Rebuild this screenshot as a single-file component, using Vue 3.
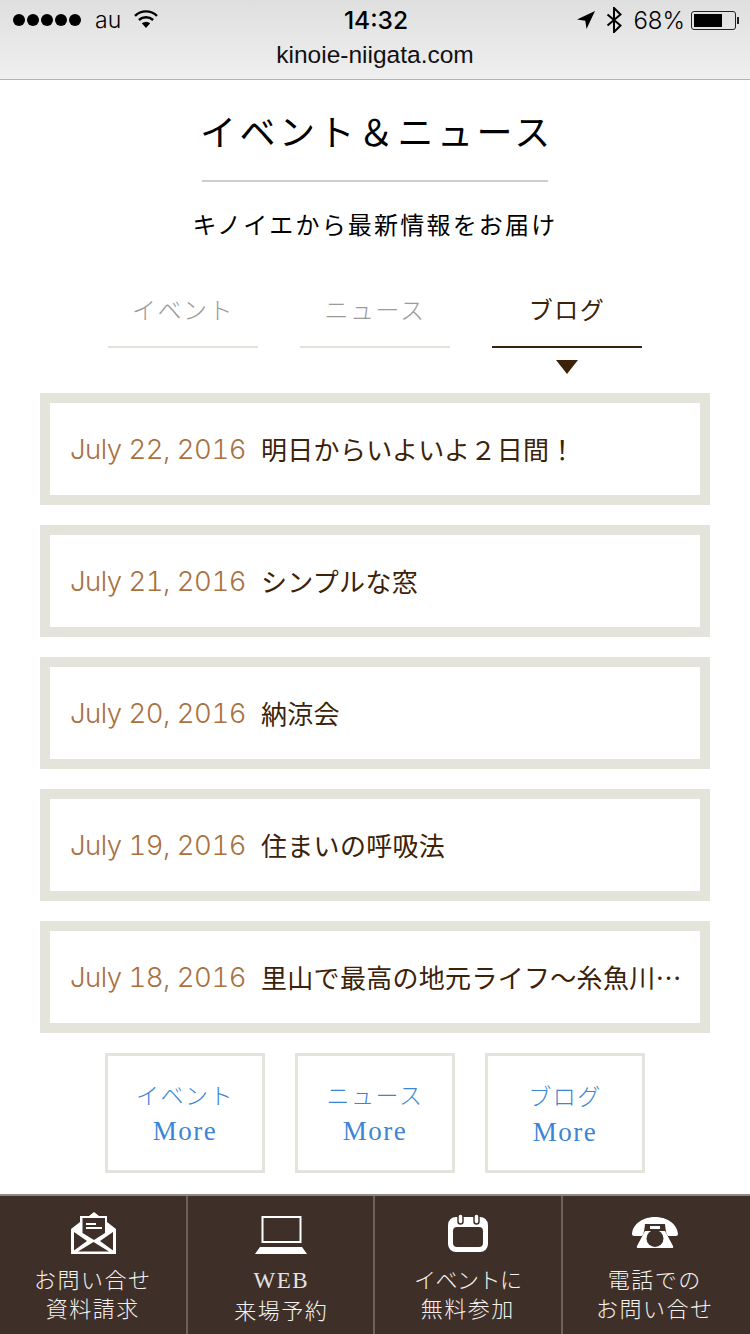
<template>
  <div class="page">
    <header class="browser">
      <div class="status">
        <div class="status-left">
          <span class="dots"><i v-for="n in 5" :key="n"></i></span>
          <span class="carrier">au</span>
          <svg class="wifi" width="26" height="20" viewBox="0 0 26 20">
            <path d="M13 19 L8.8 14.2 A6.4 6.4 0 0 1 17.2 14.2 Z" fill="#000" />
            <path d="M5.9 11 A10.6 10.6 0 0 1 20.1 11" fill="none" stroke="#000" stroke-width="2.4" />
            <path d="M2 6.8 A16 16 0 0 1 24 6.8" fill="none" stroke="#000" stroke-width="2.4" />
          </svg>
        </div>
        <div class="clock">14:32</div>
        <div class="status-right">
          <svg width="18" height="18" viewBox="0 0 18 18"><path d="M18 0 L9.5 18 L8.3 9.7 L0 8.6 Z" fill="#000" /></svg>
          <svg class="bt" width="16" height="26" viewBox="0 0 16 26"><path d="M1.500 7.500 L14.500 18.500 L8 25 V1 L14.500 7.500 L1.500 18.500" fill="none" stroke="#000" stroke-width="2" /></svg>
          <span class="pct">68%</span>
          <div class="battery"><div class="charge" :style="{ width: '72%' }"></div></div>
          <div class="nub"></div>
        </div>
      </div>
      <div class="url">kinoie-niigata.com</div>
    </header>

    <main>
      <h1>イベント＆ニュース</h1>
      <p class="lead">キノイエから最新情報をお届け</p>

      <nav class="tabs">
        <div v-for="tab in tabs" :key="tab" class="tab" :class="{ active: tab === 'ブログ' }">{{ tab }}</div>
      </nav>

      <ul class="posts">
        <li v-for="post in posts" :key="post.date">
          <span class="date">{{ post.date }}</span>
          <span class="title">{{ post.title }}</span>
        </li>
      </ul>

      <div class="more">
        <a v-for="tab in tabs" :key="tab" class="more-btn">
          <span class="ja">{{ tab }}</span>
          <span class="en">More</span>
        </a>
      </div>
    </main>

    <footer class="bottom">
      <a class="cell">
        <div class="icon">
          <svg class="mail" width="46" height="42" viewBox="0 0 46 42">
            <path d="M23 0 L28 4 H36 V10 L45 17 V42 H0 V17 L9 10 V4 H18 Z" fill="#fff" />
            <path d="M11.500 6 H34 V21 L23 28 L11.500 21 Z" fill="#3e3029" />
            <path d="M15 11 H25 V13 H15 Z M15 15 H31 V17 H15 Z" fill="#fff" />
            <path d="M3 20 L16 29 L3 38.500 Z M42 20 L29 29 L42 38.500 Z M7 39.500 L22.500 30 L38 39.500 Z" fill="#3e3029" />
          </svg>
        </div>
        <span class="label">お問い合せ<br />資料請求</span>
      </a>
      <a class="cell">
        <div class="icon">
          <svg width="52" height="38" viewBox="0 0 52 38">
            <rect x="7.500" y="1" width="38" height="25" fill="none" stroke="#fff" stroke-width="2" />
            <path d="M5 31 H47 L52 38 H0 Z" fill="#fff" />
          </svg>
        </div>
        <span class="label"><span class="latin">WEB</span><br />来場予約</span>
      </a>
      <a class="cell">
        <div class="icon">
          <svg class="cal" width="40" height="39" viewBox="0 0 40 39">
            <path fill-rule="evenodd" d="M8 4 H32 A8 8 0 0 1 40 12 V31 A8 8 0 0 1 32 39 H8 A8 8 0 0 1 0 31 V12 A8 8 0 0 1 8 4 Z M9 14 A4 4 0 0 0 5 18 V30 A4 4 0 0 0 9 34 H31 A4 4 0 0 0 35 30 V18 A4 4 0 0 0 31 14 Z" fill="#fff" />
            <rect x="10" y="1" width="5" height="10" rx="2.500" fill="#fff" stroke="#3e3029" stroke-width="1.500" />
            <rect x="26" y="1" width="5" height="10" rx="2.500" fill="#fff" stroke="#3e3029" stroke-width="1.500" />
          </svg>
        </div>
        <span class="label"><span class="tight">イベントに</span><br />無料参加</span>
      </a>
      <a class="cell">
        <div class="icon">
          <svg class="tel" width="46" height="31" viewBox="0 0 46 31">
            <path d="M0 17 C1 6 12 0 23 0 C34 0 45 6 46 17 C46 19 44 19 42 19 H37 C35 19 34 17 33 7 H13 C12 17 11 19 9 19 H4 C2 19 0 19 0 17 Z" fill="#fff" />
            <rect x="18" y="9" width="10" height="3" fill="#fff" />
            <path d="M13 14 H33 L41 29 C41.500 30.500 41 31 40 31 H6 C5 31 4.500 30.500 5 29 Z" fill="#fff" />
            <circle cx="23" cy="21.500" r="8.500" fill="#3e3029" />
          </svg>
        </div>
        <span class="label">電話での<br />お問い合せ</span>
      </a>
    </footer>
  </div>
</template>

<script setup>
const tabs = ['イベント', 'ニュース', 'ブログ']

const posts = [
  { date: 'July 22, 2016', title: '明日からいよいよ２日間！' },
  { date: 'July 21, 2016', title: 'シンプルな窓' },
  { date: 'July 20, 2016', title: '納涼会' },
  { date: 'July 19, 2016', title: '住まいの呼吸法' },
  { date: 'July 18, 2016', title: '里山で最高の地元ライフ〜糸魚川市の家づくり' },
]
</script>

<style>
html,
body {
  margin: 0;
  background: #fff;
}
</style>

<style scoped>
.page {
  width: 750px;
  height: 1334px;
  overflow: hidden;
  display: flex;
  flex-direction: column;
  font-family: "Liberation Serif", "Noto Sans CJK JP", serif;
  color: #3c2208;
}

.browser {
  height: 79px;
  flex: none;
  background: linear-gradient(#dfdfdf, #efefef);
  border-bottom: 1px solid #b4b4b4;
  font-family: "Liberation Sans", sans-serif;
  color: #000;
}

.status {
  height: 40px;
  display: grid;
  grid-template-columns: 1fr auto 1fr;
  align-items: center;
  padding: 0 11px 0 13px;
}

.status-left {
  display: flex;
  align-items: center;
}

.dots {
  display: flex;
  gap: 2px;
  margin-right: 14px;
}

.dots i {
  width: 12px;
  height: 12px;
  border-radius: 50%;
  background: #000;
}

.carrier {
  font-family: Inter, sans-serif;
  font-size: 23px;
  font-weight: 300;
  margin-right: 12px;
  color: #000;
}

.wifi {
  margin-top: -2px;
}

.clock {
  font-family: Inter, sans-serif;
  font-size: 24.500px;
  font-weight: 500;
  color: #000;
}

.status-right {
  display: flex;
  align-items: center;
  justify-content: flex-end;
}

.bt {
  margin-left: 11px;
}

.pct {
  font-family: Inter, sans-serif;
  font-size: 24px;
  font-weight: 300;
  margin-left: 11px;
  margin-right: 6px;
  color: #000;
}

.battery {
  width: 45px;
  height: 19px;
  box-sizing: border-box;
  border: 1px solid #222;
  border-radius: 3px;
  padding: 2px;
}

.charge {
  height: 100%;
  background: #000;
}

.nub {
  width: 2px;
  height: 7px;
  margin-left: 1px;
  background: #222;
}

.url {
  text-align: center;
  font-size: 24.500px;
  line-height: 30px;
  color: #111;
}

main {
  flex: 1;
  display: flex;
  flex-direction: column;
  align-items: center;
}

h1 {
  width: 346px;
  margin: 0;
  padding: 23px 0 23px;
  border-bottom: 2px solid #cdcdcd;
  font-size: 36px;
  line-height: 54px;
  font-weight: 400;
  letter-spacing: 3.500px;
  text-indent: -2px;
  white-space: nowrap;
  color: #000;
  font-family: "Noto Sans CJK JP", sans-serif;
}

.lead {
  margin: 24px 0 0;
  font-size: 24px;
  line-height: 36px;
  letter-spacing: 2.200px;
  color: #000;
  font-family: "Noto Sans CJK JP", sans-serif;
}

.tabs {
  display: flex;
  gap: 42px;
  margin-top: 46px;
}

.tab {
  position: relative;
  width: 150px;
  height: 60px;
  box-sizing: border-box;
  border-bottom: 2px solid #e2e2d9;
  text-align: center;
  font-size: 24px;
  line-height: 42px;
  letter-spacing: 1.500px;
  color: #9b9b9b;
  font-family: "Noto Sans CJK JP", sans-serif;
  font-weight: 300;
}

.tab.active {
  border-bottom-color: #3c2208;
  color: #3c2208;
  font-weight: 400;
}

.tab.active::after {
  content: "";
  position: absolute;
  left: 64px;
  top: 72px;
  border-left: 11px solid transparent;
  border-right: 11px solid transparent;
  border-top: 14px solid #3c2208;
}

.posts {
  list-style: none;
  width: 670px;
  margin: 45px 0 0;
  padding: 0;
  display: flex;
  flex-direction: column;
  gap: 20px;
}

.posts li {
  height: 112px;
  box-sizing: border-box;
  border: 10px solid #e4e4dc;
  padding: 0 16px 0 20px;
  display: flex;
  align-items: center;
  gap: 15px;
}

.date {
  flex: none;
  font-family: Inter, sans-serif;
  font-weight: 300;
  font-size: 27.500px;
  letter-spacing: -0.500px;
  font-variant-numeric: tabular-nums;
  color: #a9713f;
}

.title {
  min-width: 0;
  margin-top: -2px;
  overflow: hidden;
  white-space: nowrap;
  text-overflow: ellipsis;
  font-family: "Noto Sans CJK JP", sans-serif;
  font-size: 26px;
  letter-spacing: 0.300px;
  color: #3c2208;
}

.more {
  display: flex;
  gap: 30px;
  margin-top: 20px;
}

.more-btn {
  width: 160px;
  height: 120px;
  box-sizing: border-box;
  border: 3px solid #e4e4dc;
  display: flex;
  flex-direction: column;
  align-items: center;
  justify-content: center;
  color: #3a85d5;
}

.more-btn:nth-child(3) {
  padding-top: 2px;
}

.ja {
  font-family: "Noto Sans CJK JP", sans-serif;
  font-size: 23px;
  line-height: 34px;
  letter-spacing: 1.500px;
  font-weight: 300;
}

.en {
  margin-top: 2px;
  font-size: 27px;
  line-height: 36px;
  letter-spacing: 1.500px;
}

.bottom {
  height: 140px;
  flex: none;
  box-sizing: border-box;
  border-top: 2px solid #8c8884;
  background: #3e3029;
  display: grid;
  grid-template-columns: repeat(4, 1fr);
}

.cell {
  display: flex;
  flex-direction: column;
  align-items: center;
  padding-top: 16px;
  box-sizing: border-box;
  border-right: 2px solid #6b625c;
  color: #fff;
}

.cell:nth-child(2) {
  padding-left: 2px;
}

.cell:last-child {
  border-right: none;
  padding-right: 3px;
}

.icon {
  height: 42px;
  display: flex;
  align-items: flex-end;
}

.mail {
  margin-left: 3px;
}

.cal {
  margin-bottom: 2px;
}

.tel {
  margin-bottom: 6px;
}

.label {
  margin-top: 10px;
  text-align: center;
  font-family: "Noto Sans CJK JP", sans-serif;
  font-size: 22px;
  font-weight: 300;
  line-height: 29px;
  letter-spacing: 1.500px;
  color: #f4f2f0;
}

.latin {
  font-family: "Liberation Serif", serif;
  font-size: 23px;
  font-weight: 400;
  color: #e6e3e0;
}

.tight {
  letter-spacing: -0.500px;
}
</style>
